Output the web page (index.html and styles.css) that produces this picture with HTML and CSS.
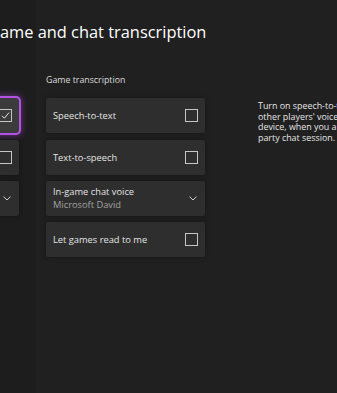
FILE: index.html
```html
<!DOCTYPE html>
<html>
	<head>
		<meta charset="UTF-8">
		<title>Game and chat transcription</title>
		<link rel="stylesheet" href="styles.css">
	</head>
	<body>
		<div id="page">
			<div class="nav_strip"></div>
			<h1 class="title">Game and chat transcription</h1>
			<div class="columns">
				<div class="col col_left">
					<div class="col_label">Chat</div>
					<div class="card card_focus">
						<span class="card_text">Chat transcription</span>
						<span class="box">
							<svg width="9" height="9" viewBox="0 0 9 9"><polyline points="1,4.8 3.4,7.2 8,1.6" fill="none" stroke="#e6e6e6" stroke-width="1"/></svg>
						</span>
					</div>
					<div class="card">
						<span class="card_text">Show chat</span>
						<span class="box"></span>
					</div>
					<div class="card">
						<span class="card_text">Position</span>
						<svg class="chev" width="8" height="5" viewBox="0 0 8 5"><polyline points="0.5,0.6 4,4 7.5,0.6" fill="none" stroke="#d0d0d0" stroke-width="1"/></svg>
					</div>
				</div>
				<div class="col col_main">
					<div class="col_label">Game transcription</div>
					<div class="card">
						<span class="card_text">Speech-to-text</span>
						<span class="box"></span>
					</div>
					<div class="card">
						<span class="card_text">Text-to-speech</span>
						<span class="box"></span>
					</div>
					<div class="card">
						<span class="card_text">In-game chat voice<span class="sub">Microsoft David</span></span>
						<svg class="chev" width="8" height="5" viewBox="0 0 8 5"><polyline points="0.5,0.6 4,4 7.5,0.6" fill="none" stroke="#d0d0d0" stroke-width="1"/></svg>
					</div>
					<div class="card">
						<span class="card_text">Let games read to me</span>
						<span class="box"></span>
					</div>
				</div>
				<div class="desc">
					<p>Turn on speech-to-text to see what</p>
					<p>other players' voices say on your</p>
					<p>device, when you are in a game or</p>
					<p>party chat session.</p>
				</div>
			</div>
		</div>
	</body>
</html>
```

FILE: styles.css
```css
*{margin: 0;padding: 0;box-sizing: border-box;}
html,body{
	width: 337px;
	height: 393px;
	overflow: hidden;
	background: #202020;
}
body{
	font-family: "Open Sans", "Noto Sans", sans-serif;
	color: #e4e4e4;
}
#page{
	position: relative;
	height: 393px;
}
.nav_strip{
	position: absolute;   /*darker strip behind the clipped left pane*/
	left: 0;
	top: 0;
	width: 36px;
	height: 393px;
	background: #1d1d1d;
}
.title{
	position: relative;
	margin-left: -12px;
	padding-top: 20px;
	font-size: 16.4px;
	font-weight: 400;
	line-height: 24px;
	color: #ffffff;
	white-space: nowrap;
}
.columns{
	position: relative;
	display: flex;
	align-items: flex-start;
	margin-top: 30px;
}
.col{
	display: flex;
	flex-direction: column;
	gap: 6.3px;
	width: 159px;
	flex-shrink: 0;
}
.col_left{
	margin-left: -140px;
}
.col_main{
	margin-left: 27px;
}
.col_label{
	font-size: 8.8px;
	line-height: 13px;
	color: #dcdcdc;
	margin-bottom: 5px;
	white-space: nowrap;
}
.card{
	display: flex;
	align-items: center;
	justify-content: space-between;
	height: 35px;
	padding: 0 7px;
	background: #2e2e2e;
	border-radius: 2px;
	box-shadow: 0 0 5px rgba(0,0,0,0.35);
	font-size: 9.3px;
	white-space: nowrap;
}
.card_focus{
	background: #3b3b3b;
	box-shadow: 0 0 0 2px #b552e6, 0 0 6px 3px rgba(170,70,220,0.45);
	border-radius: 3px;
}
.card_text{
	display: flex;
	flex-direction: column;
	line-height: 13px;
}
.sub{
	color: #a2a2a2;
}
.box{
	display: flex;
	align-items: center;
	justify-content: center;
	width: 13px;
	height: 13px;
	border: 1.5px solid #c6c6c6;
}
.chev{
	margin-right: 1px;
}
.desc{
	margin-left: 53px;
	margin-top: 27px;
	width: 180px;
	flex-shrink: 0;
	font-size: 8.9px;
	line-height: 10.5px;
	color: #e6e6e6;
	white-space: nowrap;
}
```
